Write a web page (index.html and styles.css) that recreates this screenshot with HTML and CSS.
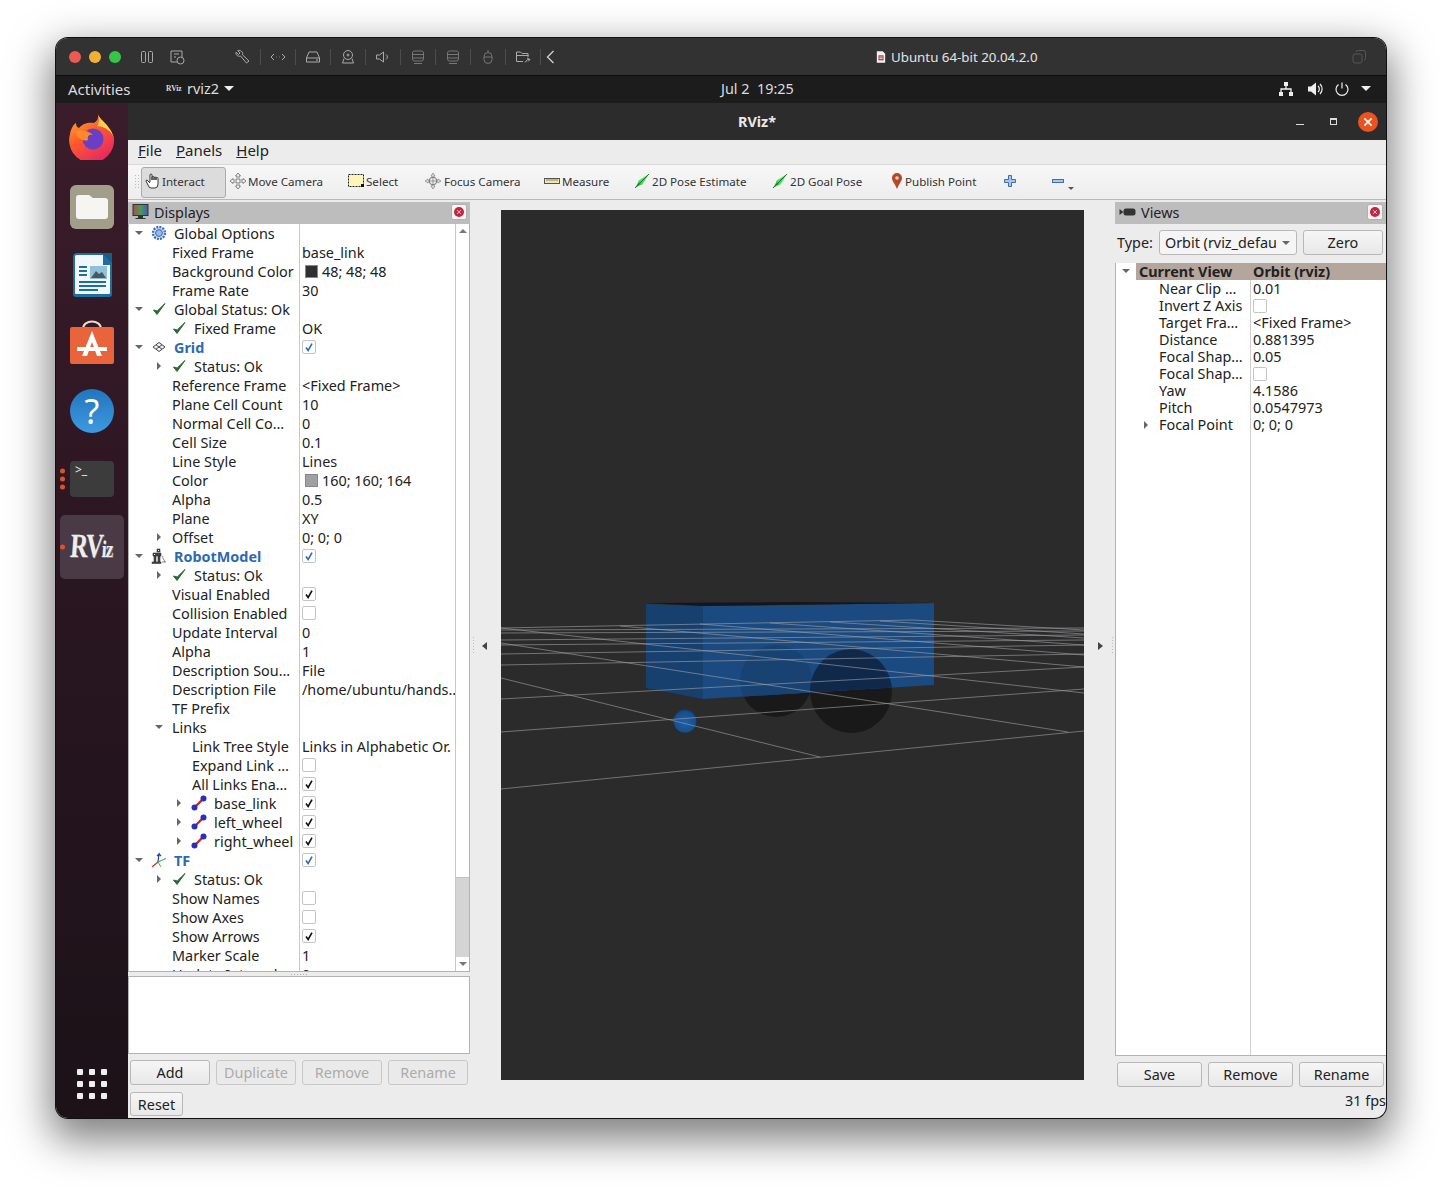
FILE: index.html
```html
<!DOCTYPE html>
<html lang="en">
<head>
    <meta charset="UTF-8">
    <title>RViz</title>
    <link rel="stylesheet" href="styles.css">
</head>
<body>

<svg class="defs" width="0" height="0">
    <symbol id="gear" viewBox="0 0 16 16">
        <circle cx="8" cy="8" r="6" fill="#dbe6f7" stroke="#3f6fc0" stroke-width="2.4" stroke-dasharray="2 1.1"/>
        <circle cx="8" cy="8" r="3.4" fill="#9db9e8" stroke="#3566b5"/>
    </symbol>
    <symbol id="check" viewBox="0 0 16 16">
        <path d="M2.5 9 L6 13.5 L14 2.5 L6.2 10 Z" fill="#2a6a34" stroke="#2a6a34" stroke-width="1"/>
    </symbol>
    <symbol id="grid" viewBox="0 0 16 16">
        <path d="M8 3.5 L14 8 L8 12.5 L2 8 Z M5 5.8 L11 10.2 M11 5.8 L5 10.2" fill="#f4f4f4" stroke="#444" stroke-width="1"/>
    </symbol>
    <symbol id="robot" viewBox="0 0 16 16">
        <path d="M6 1h3v3H6z M2 5h8v3H2z M3 8h2v6H3z M7 8h2v6H7z M1 14h9v1.5H1z M11 8l3 6 M11 14h4" fill="#444" stroke="#333" stroke-width=".6"/>
        <path d="M3 6h1v1H3z M7 2h1v1H7z" fill="#fff"/>
    </symbol>
    <symbol id="axes" viewBox="0 0 16 16">
        <path d="M7 10 L1 15" stroke="#c8332e" stroke-width="1.3" fill="none"/>
        <path d="M7 10 L8 2 L6 4 M8 2 L10 4" stroke="#2a3fa8" stroke-width="1.2" fill="none"/>
        <path d="M7 10 L15 6.5" stroke="#3bb84a" stroke-width="1.2" fill="none"/>
        <path d="M7 10 L10 15" stroke="#3bb84a" stroke-width="1" fill="none"/>
    </symbol>
    <symbol id="link" viewBox="0 0 16 16">
        <path d="M4 12 L12 4" stroke="#c4262e" stroke-width="2.4"/>
        <circle cx="3.5" cy="12.5" r="3" fill="#2a2fb8"/>
        <circle cx="12.5" cy="3.5" r="3" fill="#2a2fb8"/>
    </symbol>
    <symbol id="pose" viewBox="0 0 16 16">
        <path d="M1 15 L5 8 L8 11 Z" fill="#1fb034"/>
        <path d="M4 8 L15 1 L8 12 Z" fill="#3ce05a"/>
        <path d="M1 15 L15 1" stroke="#148024" stroke-width="1"/>
    </symbol>
    <symbol id="close" viewBox="0 0 16 16">
        <rect x=".5" y=".5" width="15" height="15" rx="2" fill="#f4f4f4" stroke="#b0b0b0"/>
        <circle cx="8" cy="8" r="5" fill="#c4253f"/>
        <path d="M6 6 L10 10 M10 6 L6 10" stroke="#f0c0c8" stroke-width="1"/>
    </symbol>
    <symbol id="tick" viewBox="0 0 14 14">
        <path d="M3.5 7.5 L6 11 L10.5 3" fill="none" stroke="currentColor" stroke-width="1.9"/>
    </symbol>
</svg>

<div class="window">

    <div class="titlebar">
        <span class="light red"></span>
        <span class="light yellow"></span>
        <span class="light green"></span>
        <div class="vm-tools">
            <svg class="vm w30" viewBox="0 0 16 16"><rect x="2.5" y="2.5" width="4" height="11" rx="1"/><rect x="9.5" y="2.5" width="4" height="11" rx="1"/></svg>
            <svg class="vm w30 gap-big" viewBox="0 0 16 16"><path d="M13 8V2H2v11h6 M5 5h5 M5 8h2"/><circle cx="11.5" cy="11.5" r="3.5"/></svg>
            <svg class="vm w35" viewBox="0 0 16 16"><path d="M3.200 1.500 L5.500 4 L4 5.500 L1.500 3.200 C1 6 3.500 8 6 7 L12 14 L14.500 12 L8 5.800 C9 3 6 .8 3.200 1.500 Z"/></svg>
            <svg class="vm w35 sep" viewBox="0 0 16 16"><path d="M4 5 L1 8 L4 11 M12 5 L15 8 L12 11 M6.5 8h.5 M9 8h.5"/></svg>
            <svg class="vm w35 sep" viewBox="0 0 16 16"><path d="M4 3h8l2.5 6v4h-13V9z M1.5 9h13"/><circle cx="12" cy="11" r=".5"/></svg>
            <svg class="vm w35 sep" viewBox="0 0 16 16"><circle cx="8" cy="6" r="4.5"/><circle cx="8" cy="6" r="1"/><path d="M4 9.5 L2.5 14 h11 L12 9.5"/></svg>
            <svg class="vm w35 sep" viewBox="0 0 16 16"><path d="M1.5 6h3l4-3v10l-4-3h-3z M11 5.5 a3 3 0 0 1 0 5"/></svg>
            <svg class="vm w35 sep dim" viewBox="0 0 16 16"><rect x="2.5" y="2" width="11" height="10" rx="2"/><path d="M2.5 5.5h11 M2.5 9h11 M4 14.5h8"/></svg>
            <svg class="vm w35 sep dim" viewBox="0 0 16 16"><rect x="2.5" y="2" width="11" height="10" rx="2"/><path d="M2.5 5.5h11 M2.5 9h11 M4 14.5h8"/></svg>
            <svg class="vm w35 sep dim" viewBox="0 0 16 16"><rect x="4" y="3.5" width="8" height="11" rx="4"/><path d="M4 8h8 M8 3.5V1"/></svg>
            <svg class="vm w35 sep" viewBox="0 0 16 16"><path d="M8 12.5H1.5V3h4l1.5 1.5h6V8 M1.5 6.5h12"/><path d="M10 13.5 q2 -4 5 -3 M12 9l3 1.5-2 2"/></svg>
            <svg class="vm chev sep" viewBox="0 0 16 16"><path d="M11 2 L5 8 L11 14"/></svg>
        </div>
        <div class="vm-title">
            <svg class="doc" viewBox="0 0 12 14"><path d="M1 0h7l3 3v11H1z" fill="#f2f2f2"/><rect x="3" y="5" width="6" height="6" fill="#a32a4a"/><path d="M4 7h4 M4 9h4" stroke="#fff"/></svg>
            Ubuntu 64-bit 20.04.2.0
        </div>
        <svg class="vm tile" viewBox="0 0 16 16"><rect x="2" y="5" width="9" height="9" rx="2"/><path d="M5 3 q0 -1.500 2 -1.500 h6 q1.500 0 1.500 2 v6 q0 1.500 -1.500 1.500"/></svg>
    </div>

    <div class="topbar">
        <div class="topbar-left">
            <span class="activities">Activities</span>
            <span class="app-mini">RViz</span>
            <span class="app-name">rviz2</span>
            <span class="caret-white"></span>
        </div>
        <span class="clock">Jul 2&nbsp; 19:25</span>
        <div class="tray">
            <svg class="tray-ico" viewBox="0 0 16 16"><path d="M6 1h4v4H6z M1 11h4v4H1z M11 11h4v4h-4z" fill="#eee"/><path d="M8 5v3 M3 11V8h10v3" stroke="#eee" fill="none" stroke-width="1.3"/></svg>
            <svg class="tray-ico" viewBox="0 0 16 16"><path d="M1 5.500h3l5-4v13l-5-4H1z" fill="#eee"/><path d="M11 5 a4 4 0 0 1 0 6 M13 3 a7 7 0 0 1 0 10" stroke="#eee" fill="none" stroke-width="1.200"/></svg>
            <svg class="tray-ico power" viewBox="0 0 16 16"><path d="M8 1.500v6 M4.500 3.500 a6 6 0 1 0 7 0" stroke="#eee" fill="none" stroke-width="1.200"/></svg>
            <span class="caret-white"></span>
        </div>
    </div>

    <div class="desktop">

        <nav class="dock">
            <div class="dock-item">
                <svg class="dock-ico ff" viewBox="0 0 46 46">
                    <defs>
                        <linearGradient id="ffx" x1="0" y1="0" x2=".6" y2="1"><stop offset="0" stop-color="#ffb52e"/><stop offset=".5" stop-color="#ff5a2c"/><stop offset="1" stop-color="#e62a62"/></linearGradient>
                    </defs>
                    <path d="M29 0 C30 6 41 10 45 24 A22.500 22.500 0 1 1 1 20 C2 14 5 10 7 9 C7 12 8 13 10 14 C14 9 20 8 25 9 C30 6 29 3 29 0 Z" fill="url(#ffx)"/>
                    <circle cx="24" cy="25" r="10.500" fill="#6a3fc4"/>
                    <path d="M6 17 C12 15 20 17 24 21 C20 20 18 22 19 26 C14 28 8 24 6 17 Z" fill="#ff8a2a"/>
                    <path d="M29 0 C30 6 41 10 45 24 C42 16 34 12 28 12 C31 9 30 4 29 0 Z" fill="#ffd24a"/>
                </svg>
            </div>
            <div class="dock-item">
                <svg class="dock-ico" viewBox="0 0 46 46">
                    <rect width="44" height="44" x="1" y="1" rx="6" fill="#a39e8c"/>
                    <path d="M7 14 a3 3 0 0 1 3-3 h10 l4 3 h12 a3 3 0 0 1 3 3 v15 a3 3 0 0 1-3 3 H10 a3 3 0 0 1-3-3 Z" fill="#f6f5f2"/>
                </svg>
            </div>
            <div class="dock-item">
                <svg class="dock-ico" viewBox="0 0 46 46">
                    <path d="M8 1 h27 l8 8 v33 a3 3 0 0 1-3 3 H7 a3 3 0 0 1-3-3 V5 a4 4 0 0 1 4-4 Z" fill="#1e6f9f"/>
                    <path d="M7 3 h27 v10 h7 v28 a1 1 0 0 1-1 1 H7 a1 1 0 0 1-1-1 V4 Z" fill="#f0f6fa"/>
                    <path d="M33 1 l10 0 v10 Z" fill="#1c5b82"/>
                    <rect x="21" y="14" width="17" height="13" fill="#8fc1dc"/>
                    <path d="M22 26 l5-7 3 3 3-2 4 6 Z" fill="#4a5a5a"/>
                    <path d="M10 15h8 M10 19h8 M10 23h8 M10 30h27 M10 34h27 M10 38h19" stroke="#1e6f9f" stroke-width="2"/>
                </svg>
            </div>
            <div class="dock-item">
                <svg class="dock-ico" viewBox="0 0 46 46">
                    <path d="M14 9 C14 -1 32 -1 32 9" fill="none" stroke="#f0d9c8" stroke-width="2"/>
                    <path d="M3 7 h40 a2 2 0 0 1 2 2 v33 a2 2 0 0 1-2 2 H3 a2 2 0 0 1-2-2 V9 a2 2 0 0 1 2-2 Z" fill="#e9643a"/>
                    <path d="M23 11 L33 36 h-5 L23 22 L18 36 h-5 Z" fill="#fff"/>
                    <path d="M8 27 h30 v4 H8 Z" fill="#fff"/>
                </svg>
            </div>
            <div class="dock-item">
                <div class="help-ball">?</div>
            </div>
            <div class="dock-item">
                <div class="terminal"><span>&gt;_</span></div>
                <span class="run-dots"><i></i><i></i><i></i></span>
            </div>
            <div class="dock-item active">
                <span class="rviz-logo">RV<small>iz</small></span>
                <span class="run-dots"><i></i></span>
            </div>
            <div class="apps-grid">
                <i></i><i></i><i></i><i></i><i></i><i></i><i></i><i></i><i></i>
            </div>
        </nav>

        <main class="app">
            <header class="app-title">
                <span class="app-title-text">RViz*</span>
                <span class="win-btn win-min"></span>
                <span class="win-btn win-max"></span>
                <span class="win-close">
                    <svg viewBox="0 0 10 10"><path d="M2 2 L8 8 M8 2 L2 8" stroke="#fff" stroke-width="1.300"/></svg>
                </span>
            </header>

            <div class="menubar">
                <span class="menu"><u>F</u>ile</span>
                <span class="menu"><u>P</u>anels</span>
                <span class="menu"><u>H</u>elp</span>
            </div>

            <div class="toolbar">
                <span class="grip"></span>
                <div class="tool t-interact"><div class="pressed">
                    <svg class="tool-ico" viewBox="0 0 16 16"><path d="M5 9V2 a1 1 0 0 1 2 0 V7 V4.500 a1 1 0 0 1 2 0 V7 V5 a1 1 0 0 1 2 0 V7 V5.500 a1 1 0 0 1 2 0 V11 q0 4-3 4 H6 q-2 0-3-3 L1 8 q0-1 1-1 L5 10" fill="#fff" stroke="#222" stroke-width=".9"/></svg>
                    Interact
                </div></div>
                <div class="tool t-move">
                    <svg class="tool-ico" viewBox="0 0 16 16"><path d="M8 0 L10.500 3 H9 V7 H13 V5.500 L16 8 L13 10.500 V9 H9 V13 H10.500 L8 16 L5.500 13 H7 V9 H3 V10.500 L0 8 L3 5.500 V7 H7 V3 H5.500 Z" fill="#f2f2f2" stroke="#666" stroke-width=".8"/></svg>
                    Move Camera
                </div>
                <div class="tool t-select">
                    <svg class="tool-ico" viewBox="0 0 16 16"><rect x=".5" y="1.500" width="15" height="12" fill="#fcf6b8" stroke="#222" stroke-dasharray="2 1"/><rect x="13" y="11" width="3" height="3" fill="#111"/></svg>
                    Select
                </div>
                <div class="tool t-focus">
                    <svg class="tool-ico" viewBox="0 0 16 16"><path d="M8 0 L10 3 H9 V5 H7 V3 H6 Z M8 16 L6 13 H7 V11 H9 V13 H10 Z M0 8 L3 6 V7 H5 V9 H3 V10 Z M16 8 L13 10 V9 H11 V7 H13 V6 Z" fill="#d8d8d8" stroke="#777" stroke-width=".6"/><circle cx="8" cy="8" r="3.800" fill="#eee" stroke="#777"/><path d="M8 4v8 M4 8h8" stroke="#777" stroke-width=".7"/></svg>
                    Focus Camera
                </div>
                <div class="tool t-measure">
                    <svg class="tool-ico" viewBox="0 0 16 16"><rect x=".5" y="5.500" width="15" height="5" fill="#f3e6a8" stroke="#555"/><path d="M3 6v2 M5 6v2 M7 6v2 M9 6v2 M11 6v2 M13 6v2" stroke="#555" stroke-width=".7"/></svg>
                    Measure
                </div>
                <div class="tool t-pose"><svg class="tool-ico"><use href="#pose"/></svg>2D Pose Estimate</div>
                <div class="tool t-goal"><svg class="tool-ico"><use href="#pose"/></svg>2D Goal Pose</div>
                <div class="tool t-publish">
                    <svg class="tool-ico" viewBox="0 0 16 16"><path d="M8 16 C6 11 3 8 3 5 A5 5 0 0 1 13 5 C13 8 10 11 8 16 Z" fill="#b5482c"/><circle cx="8" cy="5" r="1.800" fill="#f0d0c0"/></svg>
                    Publish Point
                </div>
                <div class="tool t-plus">
                    <svg class="tool-ico small" viewBox="0 0 12 12"><path d="M4.500 .5h3v4h4v3h-4v4h-3v-4h-4v-3h4z" fill="#a8c6ea" stroke="#3f6fb0"/></svg>
                </div>
                <div class="tool t-minus">
                    <svg class="tool-ico small" viewBox="0 0 12 12"><rect x=".5" y="4.500" width="11" height="3" fill="#a8c6ea" stroke="#3f6fb0"/></svg>
                    <span class="more"></span>
                </div>
            </div>

            <div class="content">

                <section class="left-col">
                    <div class="dock-title">
                        <svg class="dock-title-ico" viewBox="0 0 16 16">
                            <defs><linearGradient id="scr" x1="0" x2="1"><stop offset="0" stop-color="#b04a4a"/><stop offset=".5" stop-color="#4a9a5a"/><stop offset="1" stop-color="#4a5ab0"/></linearGradient></defs>
                            <rect x=".5" y=".5" width="15" height="11" fill="url(#scr)" stroke="#333"/>
                            <path d="M6 12h4v2H6z M3 14.500h10" stroke="#333" fill="#333"/>
                        </svg>
                        <span>Displays</span>
                        <svg class="dock-close"><use href="#close"/></svg>
                    </div>

                    <div class="tree-wrap">
                        <div class="tree">
                            <div class="row"><div class="name l0"><i class="arrow down"></i><svg class="ico"><use href="#gear"/></svg><b class="label">Global Options</b></div><div class="val"></div></div>
                            <div class="row"><div class="name p1">Fixed Frame</div><div class="val">base_link</div></div>
                            <div class="row"><div class="name p1">Background Color</div><div class="val"><i class="swatch dark"></i>48; 48; 48</div></div>
                            <div class="row"><div class="name p1">Frame Rate</div><div class="val">30</div></div>
                            <div class="row"><div class="name l0"><i class="arrow down"></i><svg class="ico"><use href="#check"/></svg><b class="label">Global Status: Ok</b></div><div class="val"></div></div>
                            <div class="row"><div class="name l2"><svg class="ico"><use href="#check"/></svg><b class="label">Fixed Frame</b></div><div class="val">OK</div></div>
                            <div class="row"><div class="name l0"><i class="arrow down"></i><svg class="ico"><use href="#grid"/></svg><b class="label display">Grid</b></div><div class="val"><span class="cb blue"><svg><use href="#tick"/></svg></span></div></div>
                            <div class="row"><div class="name l1"><i class="arrow right"></i><svg class="ico"><use href="#check"/></svg><b class="label">Status: Ok</b></div><div class="val"></div></div>
                            <div class="row"><div class="name p1">Reference Frame</div><div class="val">&lt;Fixed Frame&gt;</div></div>
                            <div class="row"><div class="name p1">Plane Cell Count</div><div class="val">10</div></div>
                            <div class="row"><div class="name p1">Normal Cell Co…</div><div class="val">0</div></div>
                            <div class="row"><div class="name p1">Cell Size</div><div class="val">0.1</div></div>
                            <div class="row"><div class="name p1">Line Style</div><div class="val">Lines</div></div>
                            <div class="row"><div class="name p1">Color</div><div class="val"><i class="swatch grey"></i>160; 160; 164</div></div>
                            <div class="row"><div class="name p1">Alpha</div><div class="val">0.5</div></div>
                            <div class="row"><div class="name p1">Plane</div><div class="val">XY</div></div>
                            <div class="row"><div class="name l1"><i class="arrow right"></i><b class="label near">Offset</b></div><div class="val">0; 0; 0</div></div>
                            <div class="row"><div class="name l0"><i class="arrow down"></i><svg class="ico"><use href="#robot"/></svg><b class="label display">RobotModel</b></div><div class="val"><span class="cb blue"><svg><use href="#tick"/></svg></span></div></div>
                            <div class="row"><div class="name l1"><i class="arrow right"></i><svg class="ico"><use href="#check"/></svg><b class="label">Status: Ok</b></div><div class="val"></div></div>
                            <div class="row"><div class="name p1">Visual Enabled</div><div class="val"><span class="cb"><svg><use href="#tick"/></svg></span></div></div>
                            <div class="row"><div class="name p1">Collision Enabled</div><div class="val"><span class="cb"></span></div></div>
                            <div class="row"><div class="name p1">Update Interval</div><div class="val">0</div></div>
                            <div class="row"><div class="name p1">Alpha</div><div class="val">1</div></div>
                            <div class="row"><div class="name p1">Description Sou…</div><div class="val">File</div></div>
                            <div class="row"><div class="name p1">Description File</div><div class="val">/home/ubuntu/hands..</div></div>
                            <div class="row"><div class="name p1">TF Prefix</div><div class="val"></div></div>
                            <div class="row"><div class="name l1"><i class="arrow down"></i><b class="label near">Links</b></div><div class="val"></div></div>
                            <div class="row"><div class="name p2">Link Tree Style</div><div class="val">Links in Alphabetic Or.</div></div>
                            <div class="row"><div class="name p2">Expand Link …</div><div class="val"><span class="cb"></span></div></div>
                            <div class="row"><div class="name p2">All Links Ena…</div><div class="val"><span class="cb"><svg><use href="#tick"/></svg></span></div></div>
                            <div class="row"><div class="name l2"><i class="arrow right"></i><svg class="ico"><use href="#link"/></svg><b class="label">base_link</b></div><div class="val"><span class="cb"><svg><use href="#tick"/></svg></span></div></div>
                            <div class="row"><div class="name l2"><i class="arrow right"></i><svg class="ico"><use href="#link"/></svg><b class="label">left_wheel</b></div><div class="val"><span class="cb"><svg><use href="#tick"/></svg></span></div></div>
                            <div class="row"><div class="name l2"><i class="arrow right"></i><svg class="ico"><use href="#link"/></svg><b class="label">right_wheel</b></div><div class="val"><span class="cb"><svg><use href="#tick"/></svg></span></div></div>
                            <div class="row"><div class="name l0"><i class="arrow down"></i><svg class="ico"><use href="#axes"/></svg><b class="label display">TF</b></div><div class="val"><span class="cb blue"><svg><use href="#tick"/></svg></span></div></div>
                            <div class="row"><div class="name l1"><i class="arrow right"></i><svg class="ico"><use href="#check"/></svg><b class="label">Status: Ok</b></div><div class="val"></div></div>
                            <div class="row"><div class="name p1">Show Names</div><div class="val"><span class="cb"></span></div></div>
                            <div class="row"><div class="name p1">Show Axes</div><div class="val"><span class="cb"></span></div></div>
                            <div class="row"><div class="name p1">Show Arrows</div><div class="val"><span class="cb"><svg><use href="#tick"/></svg></span></div></div>
                            <div class="row"><div class="name p1">Marker Scale</div><div class="val">1</div></div>
                            <div class="row"><div class="name p1">Update Interval</div><div class="val">0</div></div>
                        </div>
                        <div class="scrollbar">
                            <span class="sb-btn"><i class="sb-up"></i></span>
                            <span class="sb-track"></span>
                            <span class="sb-thumb"></span>
                            <span class="sb-btn"><i class="sb-down"></i></span>
                        </div>
                    </div>

                    <div class="grip-h"></div>
                    <div class="help-box"></div>

                    <div class="btn-row">
                        <button class="btn w80">Add</button>
                        <button class="btn w80" disabled>Duplicate</button>
                        <button class="btn w80" disabled>Remove</button>
                        <button class="btn w80" disabled>Rename</button>
                    </div>
                    <button class="btn reset">Reset</button>
                </section>

                <section class="center-col">
                    <span class="split-arrow to-left"></span>
                    <svg class="scene" viewBox="501 210 583 870">
                        <defs>
                            <radialGradient id="ball" cx=".5" cy=".55" r=".55"><stop offset="0" stop-color="#1f5fa8"/><stop offset=".8" stop-color="#174f8f"/><stop offset="1" stop-color="#143a66"/></radialGradient>
                            <clipPath id="boxclip"><path d="M646 603 L703 606 L934 603 L934 685 L703 699 L646 688 Z"/></clipPath>
                        </defs>
                        <ellipse class="wheel" cx="776" cy="681" rx="36" ry="36"/>
                        <ellipse class="wheel" cx="851" cy="691" rx="41" ry="42" transform="rotate(-8 851 691)"/>
                        <path d="M646 604 L703 606 L703 699 L646 688 Z" fill="#17406e"/>
                        <path d="M703 606 L934 603 L934 685 L703 699 Z" fill="#1a4a7f"/>
                        <path d="M646 603 L703 606 L934 603 L800 602 Z" fill="#14161c"/>
                        <g clip-path="url(#boxclip)">
                            <ellipse fill="#174272" cx="776" cy="681" rx="36" ry="36"/>
                            <ellipse fill="#10294a" cx="851" cy="691" rx="41" ry="42" transform="rotate(-8 851 691)"/>
                        </g>
                        <circle cx="685" cy="721" r="11.500" fill="url(#ball)"/>
                        <g class="gridlines">
                            <path d="M501 789 L1084 731"/>
                            <path d="M501 732 L1084 689"/>
                            <path d="M501 699 L1084 667"/>
                            <path d="M501 665 L1084 654"/>
                            <path d="M501 654 L1084 645"/>
                            <path d="M501 645 L1084 640"/>
                            <path d="M501 640 L1084 635"/>
                            <path d="M501 633 L1084 631"/>
                            <path d="M501 630 L1084 628"/>
                            <path d="M501 628 L913 620"/>
                            <path d="M501 678 L820 757"/>
                            <path d="M501 643 L1068 732"/>
                            <path d="M501 628 L1084 693"/>
                            <path d="M620 626 L1084 667"/>
                            <path d="M700 624 L1084 655"/>
                            <path d="M770 623 L1084 645"/>
                            <path d="M830 622 L1084 638"/>
                            <path d="M880 621 L1084 634"/>
                            <path d="M913 620 L1084 630"/>
                        </g>
                    </svg>
                    <span class="split-arrow to-right"></span>
                </section>

                <section class="right-col">
                    <div class="dock-title">
                        <svg class="dock-title-ico" viewBox="0 0 16 16"><path d="M0 5 L4 8 L0 11 Z" fill="#333"/><rect x="4" y="4.500" width="12" height="7" rx="2.500" fill="#333"/></svg>
                        <span>Views</span>
                        <svg class="dock-close"><use href="#close"/></svg>
                    </div>
                    <div class="type-row">
                        <span>Type:</span>
                        <div class="combo"><span class="combo-text">Orbit (rviz_defau</span><i class="combo-caret"></i></div>
                        <button class="btn w80">Zero</button>
                    </div>
                    <div class="views-tree">
                        <div class="vrow head"><div class="vname"><i class="arrow down"></i><b>Current View</b></div><div class="vval"><b>Orbit (rviz)</b></div></div>
                        <div class="vrow"><div class="vname">Near Clip …</div><div class="vval">0.01</div></div>
                        <div class="vrow"><div class="vname">Invert Z Axis</div><div class="vval"><span class="cb"></span></div></div>
                        <div class="vrow"><div class="vname">Target Fra…</div><div class="vval">&lt;Fixed Frame&gt;</div></div>
                        <div class="vrow"><div class="vname">Distance</div><div class="vval">0.881395</div></div>
                        <div class="vrow"><div class="vname">Focal Shap…</div><div class="vval">0.05</div></div>
                        <div class="vrow"><div class="vname">Focal Shap…</div><div class="vval"><span class="cb"></span></div></div>
                        <div class="vrow"><div class="vname">Yaw</div><div class="vval">4.1586</div></div>
                        <div class="vrow"><div class="vname">Pitch</div><div class="vval">0.0547973</div></div>
                        <div class="vrow"><div class="vname has-arrow"><i class="arrow right"></i>Focal Point</div><div class="vval">0; 0; 0</div></div>
                    </div>
                    <div class="btn-row views-btns">
                        <button class="btn w85">Save</button>
                        <button class="btn w85">Remove</button>
                        <button class="btn w85">Rename</button>
                    </div>
                    <div class="fps">31 fps</div>
                </section>

            </div>
        </main>
    </div>
</div>

</body>
</html>
```

FILE: styles.css
```css
* {
    box-sizing: border-box;
}

html, body {
    margin: 0;
    padding: 0;
}

body {
    width: 1442px;
    height: 1192px;
    padding: 38px 56px 0;
    background: #fff;
    font-family: "Noto Sans", "Open Sans", sans-serif;
    font-size: 14.4px;
    color: #222;
    overflow: hidden;
}

.defs {
    position: absolute;
}

.window {
    width: 1330px;
    height: 1080px;
    border-radius: 12px;
    overflow: hidden;
    background: #edecec;
    box-shadow: 0 0 0 1px #111, 0 16px 40px 6px rgba(0, 0, 0, .5);
    display: flex;
    flex-direction: column;
}

/* mac vm title bar */
.titlebar {
    height: 38px;
    flex: none;
    background: #323232;
    border-bottom: 1px solid #0c0c0c;
    display: flex;
    align-items: center;
    padding-left: 13px;
    color: #ddd;
}

.light {
    width: 12px;
    height: 12px;
    border-radius: 50%;
    margin-right: 8px;
}

.red { background: #ed5a52; }
.yellow { background: #f2b134; }
.green { background: #35c649; }

.vm-tools {
    display: flex;
    align-items: center;
    margin-left: 3px;
}

.vm {
    height: 16px;
    fill: none;
    stroke: #aaa;
    stroke-width: 1;
    flex: none;
}

.w30 { width: 30px; }
.w35 { width: 35px; }
.gap-big { margin-right: 33px; }
.dim { stroke: #777; }

.sep {
    border-left: 1px solid #4c4c4c;
}

.chev {
    width: 20px;
    stroke: #ccc;
    stroke-width: 1.4;
}

.vm-title {
    display: flex;
    align-items: center;
    gap: 5px;
    margin-left: 316px;
    font-size: 13.3px;
    color: #e4e4e4;
}

.doc {
    width: 10px;
    height: 14px;
}

.tile {
    width: 16px;
    margin-left: 313px;
    stroke: #555;
}

/* gnome top bar */
.topbar {
    height: 27px;
    flex: none;
    background: #1c1c1c;
    display: flex;
    align-items: center;
    padding-bottom: 2px;
    color: #dcdcdc;
}

.topbar-left {
    width: 665px;
    display: flex;
    align-items: center;
    padding-left: 12px;
}

.activities {
    width: 98px;
    font-size: 15px;
}

.app-mini {
    width: 21px;
    font-family: "Liberation Serif", serif;
    font-weight: bold;
    font-size: 7.5px;
}

.app-name {
    margin-right: 5px;
}

.caret-white {
    width: 0;
    height: 0;
    border-left: 5px solid transparent;
    border-right: 5px solid transparent;
    border-top: 5px solid #eee;
}

.clock {
    width: 74px;
    white-space: nowrap;
}

.tray {
    display: flex;
    align-items: center;
    margin-left: 483px;
}

.tray-ico {
    width: 16px;
    height: 16px;
    margin-right: 13px;
}

.tray-ico.power {
    margin-left: -2px;
    margin-right: 11px;
}

.desktop {
    flex: 1;
    display: flex;
    min-height: 0;
}

/* ubuntu dock */
.dock {
    width: 72px;
    flex: none;
    background: linear-gradient(#3b1c2a, #27151f 55%, #1c1218);
    display: flex;
    flex-direction: column;
    align-items: center;
    padding-top: 2px;
}

.dock-item {
    position: relative;
    width: 64px;
    height: 68px;
    flex: none;
    display: flex;
    align-items: center;
    justify-content: center;
}

.dock-item.active {
    height: 64px;
    margin-top: 2px;
    background: #493a46;
    border-radius: 5px;
}

.dock-ico {
    width: 46px;
    height: 46px;
}

.dock-ico.ff {
    margin-bottom: 4px;
}

.help-ball {
    width: 44px;
    height: 44px;
    border-radius: 50%;
    background: linear-gradient(#2275bd, #3d9ae0);
    color: #fff;
    font-size: 34px;
    line-height: 44px;
    text-align: center;
}

.terminal {
    width: 44px;
    height: 36px;
    background: #3c3c3c;
    border-radius: 4px;
    color: #eee;
    font-size: 12px;
    line-height: 14px;
    padding: 2px 0 0 5px;
}

.rviz-logo {
    font-family: "Liberation Serif", serif;
    font-weight: bold;
    font-size: 34px;
    line-height: 34px;
    color: #eee;
    letter-spacing: -2px;
    transform: scaleX(.72) skewX(-6deg);
    text-shadow: 1px 1px 0 #777;
}

.rviz-logo small {
    font-size: 24px;
    letter-spacing: -1px;
}

.run-dots {
    position: absolute;
    left: 0;
    top: 50%;
    transform: translateY(-50%);
    display: flex;
    flex-direction: column;
    gap: 3px;
}

.run-dots i {
    width: 5px;
    height: 5px;
    border-radius: 50%;
    background: #e0502a;
}

.apps-grid {
    margin-top: auto;
    margin-bottom: 19px;
    display: grid;
    grid-template-columns: repeat(3, 6px);
    gap: 6px;
}

.apps-grid i {
    width: 6px;
    height: 6px;
    border-radius: 1px;
    background: #f0eeee;
}

/* rviz window */
.app {
    flex: 1;
    min-width: 0;
    display: flex;
    flex-direction: column;
}

.app-title {
    position: relative;
    height: 37px;
    flex: none;
    background: #2c2c2c;
    color: #e8e8e8;
    display: flex;
    align-items: center;
    justify-content: flex-end;
    padding-right: 8px;
}

.app-title-text {
    position: absolute;
    left: 0;
    right: 0;
    text-align: center;
    font-weight: bold;
    font-size: 14.4px;
}

.win-btn {
    width: 8px;
    height: 8px;
    margin-right: 26px;
}

.win-min {
    height: 1px;
    margin-top: 6px;
    background: #ddd;
}

.win-max {
    width: 7px;
    height: 7px;
    border: 1px solid #ddd;
    border-top-width: 2px;
    margin-right: 21px;
}

.win-close {
    width: 20px;
    height: 20px;
    border-radius: 50%;
    background: #e95420;
    padding: 4px;
    display: flex;
}

.menubar {
    height: 24px;
    flex: none;
    display: flex;
    align-items: center;
    padding: 0 0 5px 10px;
    gap: 14px;
    font-size: 15px;
    background: #edecec;
}

.toolbar {
    height: 36px;
    flex: none;
    background: linear-gradient(#f7f7f7, #eeeded);
    border-top: 1px solid #d8d8d8;
    border-bottom: 1px solid #b9b9b9;
    display: flex;
    align-items: center;
    padding-left: 6px;
    font-size: 11.6px;
    color: #333;
}

.grip {
    width: 7px;
    height: 16px;
    background-image: radial-gradient(#bbb 1px, transparent 1px);
    background-size: 3px 3px;
}

.tool {
    display: flex;
    align-items: center;
    gap: 2px;
    flex: none;
    white-space: nowrap;
    padding-bottom: 2px;
}

.t-interact { width: 89px; padding-bottom: 0; }
.t-move { width: 118px; }
.t-select { width: 77px; }
.t-focus { width: 119px; gap: 3px; }
.t-measure { width: 90px; }
.t-pose { width: 138px; }
.t-goal { width: 117px; }
.t-publish { width: 115px; gap: 0; }
.t-plus { width: 48px; }

.pressed {
    width: 85px;
    height: 31px;
    display: flex;
    align-items: center;
    gap: 1px;
    padding: 0 0 2px 3px;
    background: #dcdcdc;
    border: 1px solid #ababab;
    border-radius: 3px;
}

.tool-ico {
    width: 16px;
    height: 16px;
    flex: none;
}

.tool-ico.small {
    width: 12px;
    height: 12px;
}

.more {
    width: 0;
    height: 0;
    margin: 14px 0 0 2px;
    border-left: 3px solid transparent;
    border-right: 3px solid transparent;
    border-top: 3px solid #555;
}

.content {
    flex: 1;
    min-height: 0;
    display: flex;
}

.left-col {
    width: 342px;
    flex: none;
    padding-top: 2px;
    display: flex;
    flex-direction: column;
}

.dock-title {
    position: relative;
    height: 22px;
    flex: none;
    background: #bdbdbd;
    display: flex;
    align-items: center;
    padding: 0 0 2px 4px;
    gap: 5px;
    color: #222;
}

.dock-title-ico {
    width: 17px;
    height: 16px;
}

.dock-close {
    position: absolute;
    right: 3px;
    top: 2px;
    width: 16px;
    height: 16px;
}

.tree-wrap {
    height: 748px;
    flex: none;
    display: flex;
    border: 1px solid #b3b3b3;
    border-top: 0;
    background: #fff;
}

.tree {
    flex: 1;
    min-width: 0;
    overflow: hidden;
    background: linear-gradient(#c9c9c9, #c9c9c9) 170px 0 / 1px 100% no-repeat #fff;
}

.row {
    height: 19px;
    display: flex;
    align-items: center;
    padding-bottom: 1px;
    white-space: nowrap;
}

.name {
    width: 171px;
    flex: none;
    display: flex;
    align-items: center;
    overflow: hidden;
}

.l0 { padding-left: 0; }
.l1 { padding-left: 20px; }
.l2 { padding-left: 40px; }
.p1 { padding-left: 43px; }
.p2 { padding-left: 63px; }

.arrow {
    width: 20px;
    height: 10px;
    flex: none;
    position: relative;
}

.arrow::after {
    content: "";
    position: absolute;
    border-style: solid;
    border-color: transparent;
}

.arrow.down::after {
    border-width: 4px 4px 0;
    border-top-color: #666;
    top: 3px;
    left: 6px;
}

.arrow.right::after {
    border-width: 4px 0 4px 4px;
    border-left-color: #666;
    top: 1px;
    left: 8px;
}

.ico {
    width: 16px;
    height: 16px;
    margin: 0 2px;
    flex: none;
}

.label {
    font-weight: normal;
    margin-left: 5px;
}

.label.near {
    margin-left: 3px;
}

.label.display {
    font-weight: bold;
    color: #2d6bb0;
}

.val {
    flex: 1;
    min-width: 0;
    padding-left: 2px;
    display: flex;
    align-items: center;
    overflow: hidden;
}

.swatch {
    width: 13px;
    height: 13px;
    margin: 0 4px 0 3px;
    border: 1px solid #888;
    flex: none;
}

.swatch.dark { background: #303030; }
.swatch.grey { background: #a0a0a4; }

.cb {
    width: 14px;
    height: 14px;
    flex: none;
    border: 1px solid #c4c4c4;
    border-radius: 2px;
    background: #fff;
    color: #111;
    display: block;
}

.cb.blue {
    color: #2d6bb0;
}

.cb svg {
    display: block;
    width: 12px;
    height: 12px;
}

.scrollbar {
    width: 14px;
    flex: none;
    border-left: 1px solid #c9c9c9;
    display: flex;
    flex-direction: column;
    background: #fff;
}

.sb-btn {
    height: 14px;
    flex: none;
    position: relative;
}

.sb-btn i {
    position: absolute;
    left: 3px;
    top: 5px;
    border-left: 4px solid transparent;
    border-right: 4px solid transparent;
}

.sb-up { border-bottom: 4px solid #777; }
.sb-down { border-top: 4px solid #777; }

.sb-track {
    flex: 1;
}

.sb-thumb {
    height: 80px;
    flex: none;
    background: #d4d4d4;
    border-top: 1px solid #c2c2c2;
}

.grip-h {
    width: 18px;
    height: 4px;
    flex: none;
    margin: 0 auto;
    background-image: radial-gradient(#aaa .8px, transparent 1px);
    background-size: 3px 3px;
    background-position: 0 1px;
    background-repeat: repeat-x;
}

.help-box {
    height: 78px;
    flex: none;
    background: #fff;
    border: 1px solid #b3b3b3;
}

.btn-row {
    display: flex;
    gap: 6px;
    margin: 6px 2px 0;
}

.btn {
    height: 25px;
    flex: none;
    padding: 0;
    font: inherit;
    color: #222;
    background: linear-gradient(#f6f6f6, #e9e8e8);
    border: 1px solid #b8b8b8;
    border-radius: 3px;
}

.btn:disabled {
    color: #ababab;
    background: #ebeaea;
    border-color: #c8c8c8;
}

.w80 { width: 80px; }
.w85 { width: 85px; }

.reset {
    width: 53px;
    height: 24px;
    margin: 7px 0 0 2px;
}

.center-col {
    position: relative;
    flex: 1;
    min-width: 0;
    display: flex;
    padding-top: 10px;
    align-items: flex-start;
    gap: 14px;
}

/* splitter grips either side of the 3d view */
.center-col::before,
.center-col::after {
    content: "";
    position: absolute;
    top: 436px;
    width: 3px;
    height: 18px;
    background-image: radial-gradient(#bbb .8px, transparent 1px);
    background-size: 3px 3px;
    background-repeat: repeat-y;
}

.center-col::before { left: 2px; }
.center-col::after { right: 1px; }

.scene {
    width: 583px;
    height: 870px;
    background: #2b2b2b;
    flex: none;
}

.split-arrow {
    width: 0;
    height: 0;
    flex: none;
    margin-top: 432px;
    border-top: 4px solid transparent;
    border-bottom: 4px solid transparent;
}

.to-left { border-right: 5px solid #444; margin-left: 12px; }
.to-right { border-left: 5px solid #444; margin-right: 12px; }

.wheel {
    fill: #191919;
}

.gridlines path {
    stroke: #a0a0a4;
    stroke-width: 1;
    opacity: .62;
    fill: none;
}

.right-col {
    width: 271px;
    flex: none;
    padding-top: 2px;
    display: flex;
    flex-direction: column;
}

.type-row {
    display: flex;
    align-items: center;
    height: 25px;
    margin: 6px 2px 0;
    gap: 6px;
}

.combo {
    width: 138px;
    height: 25px;
    flex: none;
    display: flex;
    align-items: center;
    padding: 0 6px 0 5px;
    background: #f5f5f5;
    border: 1px solid #b8b8b8;
    border-radius: 3px;
}

.combo-text {
    flex: 1;
    min-width: 0;
    overflow: hidden;
    white-space: nowrap;
}

.combo-caret {
    margin-left: 6px;
    border-left: 4px solid transparent;
    border-right: 4px solid transparent;
    border-top: 4px solid #666;
}

.views-tree {
    height: 793px;
    flex: none;
    margin-top: 8px;
    background: linear-gradient(#d0d0d0, #d0d0d0) 134px 0 / 1px 100% no-repeat #fff;
    border: 1px solid #b3b3b3;
    border-width: 0 0 1px 1px;
}

.vrow {
    height: 17px;
    display: flex;
    align-items: center;
    white-space: nowrap;
}

.vrow.head b {
    display: block;
    color: #222;
}

.vrow.head .vname {
    padding-left: 0;
}

.vrow.head .arrow {
    background: #fff;
    height: 17px;
    flex: none;
}

.vrow.head .arrow::after {
    top: 6px;
}

.vrow.head .vname b,
.vrow.head .vval {
    background: #b5a69d;
    height: 17px;
    line-height: 17px;
}

.vrow.head .vname b {
    flex: 1;
    padding-left: 3px;
}

.vname {
    width: 135px;
    flex: none;
    padding-left: 43px;
    display: flex;
    align-items: center;
}

.vname.has-arrow {
    padding-left: 20px;
}

.vname.has-arrow .arrow {
    width: 23px;
}

.vval {
    flex: 1;
    padding-left: 2px;
    min-width: 0;
}

.views-btns {
    margin-top: 6px;
}

.fps {
    margin-top: 4px;
    text-align: right;
    line-height: 20px;
}
```
